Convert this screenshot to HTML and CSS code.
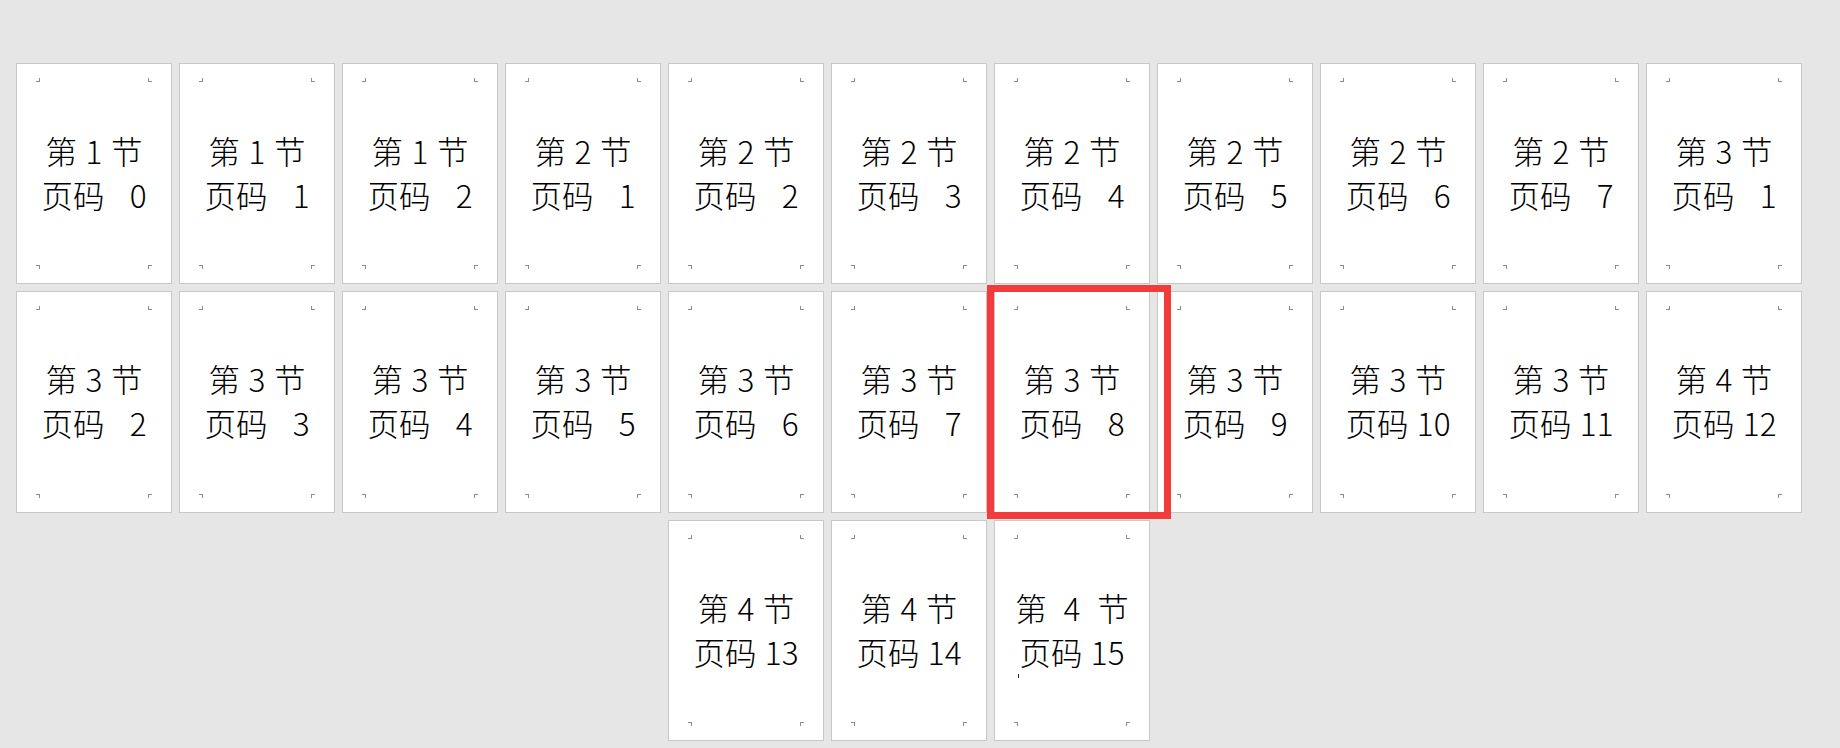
FILE: index.html
```html
<!DOCTYPE html>
<html lang="zh-CN">
<head>
<meta charset="utf-8">
<title>页面预览</title>
<link rel="stylesheet" href="styles.css">
</head>
<body>
<div class="sheet">
  <div class="page"><div class="txt"><div>第 1 节</div><div>页码   0</div></div><i class="m tl"></i><i class="m tr"></i><i class="m bl"></i><i class="m br"></i></div>
  <div class="page"><div class="txt"><div>第 1 节</div><div>页码   1</div></div><i class="m tl"></i><i class="m tr"></i><i class="m bl"></i><i class="m br"></i></div>
  <div class="page"><div class="txt"><div>第 1 节</div><div>页码   2</div></div><i class="m tl"></i><i class="m tr"></i><i class="m bl"></i><i class="m br"></i></div>
  <div class="page"><div class="txt"><div>第 2 节</div><div>页码   1</div></div><i class="m tl"></i><i class="m tr"></i><i class="m bl"></i><i class="m br"></i></div>
  <div class="page"><div class="txt"><div>第 2 节</div><div>页码   2</div></div><i class="m tl"></i><i class="m tr"></i><i class="m bl"></i><i class="m br"></i></div>
  <div class="page"><div class="txt"><div>第 2 节</div><div>页码   3</div></div><i class="m tl"></i><i class="m tr"></i><i class="m bl"></i><i class="m br"></i></div>
  <div class="page"><div class="txt"><div>第 2 节</div><div>页码   4</div></div><i class="m tl"></i><i class="m tr"></i><i class="m bl"></i><i class="m br"></i></div>
  <div class="page"><div class="txt"><div>第 2 节</div><div>页码   5</div></div><i class="m tl"></i><i class="m tr"></i><i class="m bl"></i><i class="m br"></i></div>
  <div class="page"><div class="txt"><div>第 2 节</div><div>页码   6</div></div><i class="m tl"></i><i class="m tr"></i><i class="m bl"></i><i class="m br"></i></div>
  <div class="page"><div class="txt"><div>第 2 节</div><div>页码   7</div></div><i class="m tl"></i><i class="m tr"></i><i class="m bl"></i><i class="m br"></i></div>
  <div class="page"><div class="txt"><div>第 3 节</div><div>页码   1</div></div><i class="m tl"></i><i class="m tr"></i><i class="m bl"></i><i class="m br"></i></div>

  <div class="page"><div class="txt"><div>第 3 节</div><div>页码   2</div></div><i class="m tl"></i><i class="m tr"></i><i class="m bl"></i><i class="m br"></i></div>
  <div class="page"><div class="txt"><div>第 3 节</div><div>页码   3</div></div><i class="m tl"></i><i class="m tr"></i><i class="m bl"></i><i class="m br"></i></div>
  <div class="page"><div class="txt"><div>第 3 节</div><div>页码   4</div></div><i class="m tl"></i><i class="m tr"></i><i class="m bl"></i><i class="m br"></i></div>
  <div class="page"><div class="txt"><div>第 3 节</div><div>页码   5</div></div><i class="m tl"></i><i class="m tr"></i><i class="m bl"></i><i class="m br"></i></div>
  <div class="page"><div class="txt"><div>第 3 节</div><div>页码   6</div></div><i class="m tl"></i><i class="m tr"></i><i class="m bl"></i><i class="m br"></i></div>
  <div class="page"><div class="txt"><div>第 3 节</div><div>页码   7</div></div><i class="m tl"></i><i class="m tr"></i><i class="m bl"></i><i class="m br"></i></div>
  <div class="page current"><div class="txt"><div>第 3 节</div><div>页码   8</div></div><i class="m tl"></i><i class="m tr"></i><i class="m bl"></i><i class="m br"></i><span class="sel"></span></div>
  <div class="page"><div class="txt"><div>第 3 节</div><div>页码   9</div></div><i class="m tl"></i><i class="m tr"></i><i class="m bl"></i><i class="m br"></i></div>
  <div class="page"><div class="txt"><div>第 3 节</div><div>页码 10</div></div><i class="m tl"></i><i class="m tr"></i><i class="m bl"></i><i class="m br"></i></div>
  <div class="page"><div class="txt"><div>第 3 节</div><div>页码 11</div></div><i class="m tl"></i><i class="m tr"></i><i class="m bl"></i><i class="m br"></i></div>
  <div class="page"><div class="txt"><div>第 4 节</div><div>页码 12</div></div><i class="m tl"></i><i class="m tr"></i><i class="m bl"></i><i class="m br"></i></div>

  <div class="page start5"><div class="txt"><div>第 4 节</div><div>页码 13</div></div><i class="m tl"></i><i class="m tr"></i><i class="m bl"></i><i class="m br"></i></div>
  <div class="page"><div class="txt"><div>第 4 节</div><div>页码 14</div></div><i class="m tl"></i><i class="m tr"></i><i class="m bl"></i><i class="m br"></i></div>
  <div class="page"><div class="txt"><div>第  4  节</div><div>页码 15</div></div><i class="m tl"></i><i class="m tr"></i><i class="m bl"></i><i class="m br"></i><span class="caret"></span></div>
</div>
</body>
</html>
```

FILE: styles.css
```css
html, body {
  margin: 0;
  padding: 0;
  background: #e6e6e6;
  width: 1840px;
  height: 748px;
  overflow: hidden;
}

.sheet {
  padding: 63px 0 0 16px;
  display: grid;
  grid-template-columns: repeat(11, 156px);
  grid-auto-rows: 221.3px;
  column-gap: 7px;
  row-gap: 7px;
}

.page {
  position: relative;
  box-sizing: border-box;
  background: #ffffff;
  border: 1px solid #c8c8c8;
  display: flex;
  align-items: center;
  justify-content: center;
}

.current {
  z-index: 2;
}

.start5 {
  grid-column-start: 5;
}

.txt {
  font-family: "Noto Sans CJK SC", "Noto Sans", sans-serif;
  font-weight: 300;
  font-size: 31.5px;
  line-height: 44px;
  word-spacing: 1.5px;
  color: #000000;
  text-align: center;
  white-space: pre;
  margin-top: -3px;
}

.m {
  position: absolute;
  width: 3px;
  height: 3px;
  border-color: #8c8c8c;
  border-style: solid;
  border-width: 0;
}
.tl { left: 19px; top: 14px; border-right-width: 1px; border-bottom-width: 1px; }
.tr { right: 19px; top: 14px; border-left-width: 1px; border-bottom-width: 1px; }
.bl { left: 19px; bottom: 14px; border-right-width: 1px; border-top-width: 1px; }
.br { right: 19px; bottom: 14px; border-left-width: 1px; border-top-width: 1px; }

.sel {
  position: absolute;
  left: -8px;
  top: -7px;
  width: 184px;
  height: 234px;
  box-sizing: border-box;
  border: 7px solid #f23b3b;
  pointer-events: none;
}

.caret {
  position: absolute;
  left: 23px;
  top: 153px;
  width: 1px;
  height: 4px;
  background: #222222;
}
```
